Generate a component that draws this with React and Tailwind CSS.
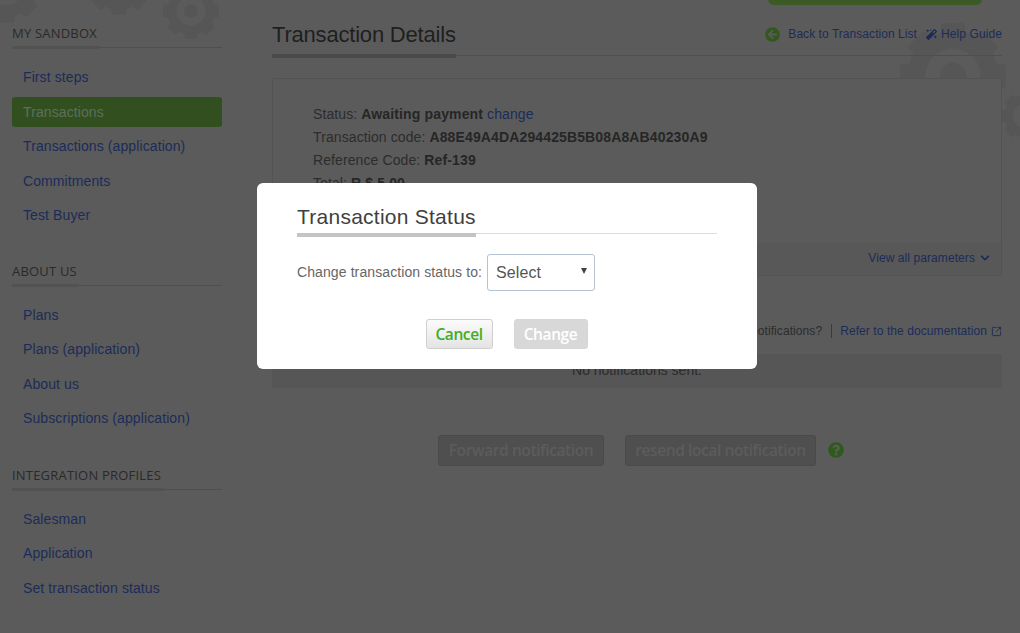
import React from "react";
import { FaArrowCircleLeft, FaMagic, FaChevronDown, FaQuestionCircle } from "react-icons/fa";
import { SquareArrowOutUpRight } from "lucide-react";

const menus = [
  { title: "MY SANDBOX", bar: "w-[87px]", gap: "", items: ["First steps", "Transactions", "Transactions (application)", "Commitments", "Test Buyer"] },
  { title: "ABOUT US", bar: "w-[66px]", gap: "mt-[33.5px]", items: ["Plans", "Plans (application)", "About us", "Subscriptions (application)"] },
  { title: "INTEGRATION PROFILES", bar: "w-[152px]", gap: "mt-[34.5px]", items: ["Salesman", "Application", "Set transaction status"] },
];

const Gear = ({ className }) => {
  const teeth = [0, 45, 90, 135, 180, 225, 270, 315];
  return (
    <svg viewBox="0 0 100 100" className={className} fill="currentColor">
      {teeth.map((a) => (
        <rect key={a} x="39" y="2" width="22" height="22" rx="3" transform={`rotate(${a} 50 50)`} />
      ))}
      <circle cx="50" cy="50" r="33" fill="none" stroke="currentColor" strokeWidth="16" />
      <circle cx="50" cy="50" r="12" />
    </svg>
  );
};

const Sidebar = () => (
  <aside className="w-[210px] ml-3 mr-[50px] shrink-0 pt-[26px] relative">
    {menus.map((m) => (
      <div key={m.title} className={m.gap}>
        <h3 className="text-[13px] leading-[15px] tracking-[0.2px] text-[#2a2a2a] font-['Open_Sans',sans-serif] pb-[6px] border-b border-[#4f4f4f] relative">
          {m.title}
          <span className={`absolute left-0 -bottom-[2px] h-[3px] bg-[#525252] ${m.bar}`}></span>
        </h3>
        <ul className="mt-[14px] flex flex-col gap-[4.5px]">
          {m.items.map((x) => (
            <li
              key={x}
              className={`h-[30px] leading-[30px] pl-[11px] text-[14px] tracking-[0.1px] rounded-[3px] ${
                x === "Transactions" ? "bg-[#32501f] text-[#5e6e5e]" : "text-[#1b2c58]"
              }`}
            >
              {x}
            </li>
          ))}
        </ul>
      </div>
    ))}
  </aside>
);

const Content = () => (
  <main className="w-[730px] relative">
    <div className="absolute -top-[2px] left-[496px] w-[214px] h-[7px] bg-[#3c5a26] rounded-b-[6px]"></div>
    <div className="flex items-start justify-between h-[56px] pt-[21px] border-b border-[#4f4f4f] relative">
      <h1 className="text-[22px] leading-[28px] tracking-[-0.2px] text-[#1f1f1f]">Transaction Details</h1>
      <div className="flex items-center text-[12px] leading-[26px] tracking-[0.05px] text-[#1b2c58]">
        <FaArrowCircleLeft className="text-[#2f5a1c] text-[15px] mr-[8px]" />
        <span>Back to Transaction List</span>
        <FaMagic className="text-[11px] ml-[9px] mr-[4px]" />
        <span className="tracking-[0.1px]">Help Guide</span>
      </div>
      <span className="absolute left-0 -bottom-[3px] h-[4px] w-[184px] bg-[#4a4a4a]"></span>
    </div>

    <section className="mt-[22px] h-[198px] border border-[#535353] bg-[#5b5b5b] flex flex-col relative">
      <div className="flex-1 pl-[40px] pt-[24px] text-[14px] leading-[23px] tracking-[0.1px] text-[#2c2c2c]">
        <p>Status: <b className="font-bold tracking-[0.14px] text-[#262626]">Awaiting payment</b> <span className="text-[#1b2c58]">change</span></p>
        <p>Transaction code: <b className="font-bold tracking-[0.13px] text-[#262626]">A88E49A4DA294425B5B08A8AB40230A9</b></p>
        <p>Reference Code: <b className="font-bold tracking-[0.13px] text-[#262626]">Ref-139</b></p>
        <p>Total: <b className="font-bold tracking-[0.13px] text-[#262626]">R $ 5.00</b></p>
      </div>
      <div className="h-[32px] bg-[#585858] flex items-center justify-end pr-[11px] pb-[2px] text-[12px] tracking-[0.08px] text-[#1b2c58]">
        View all parameters
        <FaChevronDown className="text-[10px] ml-[5px]" />
      </div>
    </section>

    <div className="mt-[45px] flex items-center justify-between h-[20px] text-[12px] tracking-[0.08px]">
      <span className="text-[14px] text-[#2c2c2c]">Notifications</span>
      <div className="flex items-center text-[#2c2c2c]">
        Why notifications?
        <span className="w-px h-[14px] bg-[#3a3a3a] mr-[8px] ml-[9px]"></span>
        <span className="text-[#1b2c58]">Refer to the documentation</span>
        <SquareArrowOutUpRight className="text-[#1b2c58] w-[11px] h-[11px] ml-[4px]" />
      </div>
    </div>

    <div className="mt-[13px] h-[34px] bg-[#565656] text-center text-[14px] leading-[33px] text-[#2c2c2c]">
      No notifications sent.
    </div>

    <div className="mt-[47px] flex items-center pl-[166px]">
      <button className="w-[166px] h-[31px] rounded-[3px] bg-[#4f4f4f] border border-[#4a4a4a] text-[#5c5c5c] text-[15.5px] tracking-[-0.4px] font-semibold font-['Open_Sans',sans-serif]">
        Forward notification
      </button>
      <button className="ml-[21px] w-[191px] h-[31px] rounded-[3px] bg-[#4f4f4f] border border-[#4a4a4a] text-[#5c5c5c] text-[15.5px] tracking-[-0.4px] font-semibold font-['Open_Sans',sans-serif]">
        resend local notification
      </button>
      <FaQuestionCircle className="ml-[12px] text-[#2f5a1c] text-[16px] -mt-[1px]" />
    </div>
  </main>
);

const Modal = () => (
  <div className="absolute left-[257px] top-[183px] w-[500px] h-[186px] bg-white rounded-[6px] px-[40px] pt-[21px]">
    <div className="border-b border-[#dcdcdc] h-[30px] relative">
      <h2 className="text-[21px] leading-[26px] text-[#3f3f3f] tracking-[0.25px]">Transaction Status</h2>
      <span className="absolute left-0 -bottom-[4px] h-[4px] w-[179px] bg-[#c4c4c4]"></span>
    </div>
    <div className="mt-[20px] flex items-center text-[14px] tracking-[0.1px] text-[#666666]">
      <label>Change transaction status to:</label>
      <div className="relative ml-[5px]">
        <select className="appearance-none w-[108px] h-[37px] pl-[8px] rounded-[3px] border border-[#b4c2d2] bg-white text-[16px] text-[#555555]">
          <option>Select</option>
        </select>
        <span className="absolute right-[8px] top-[14px] w-0 h-0 border-x-[3px] border-x-transparent border-t-[6px] border-t-[#444444]"></span>
      </div>
    </div>
    <div className="mt-[28px] flex justify-center gap-[21px] pr-[1px] font-['Open_Sans',sans-serif] font-semibold text-[15.5px] tracking-[-0.4px]">
      <button className="w-[67px] h-[30px] pt-[1px] rounded-[3px] border border-[#cfcfcf] bg-gradient-to-b from-[#fbfbfb] to-[#e4e4e4] text-[#3fae1f]">Cancel</button>
      <button className="w-[74px] h-[30px] pt-[1px] rounded-[3px] border border-[#d6d6d6] bg-[#d8d8d8] text-white">Change</button>
    </div>
  </div>
);

const App = () => (
  <div className="relative h-[633px] w-full overflow-hidden bg-[#5b5b5b] font-['Liberation_Sans',Arial,sans-serif]">
    <Gear className="absolute -left-[32px] -top-[52px] w-[76px] h-[76px] text-[#565656]" />
    <Gear className="absolute left-[80px] -top-[52px] w-[78px] h-[68px] text-[#565656]" />
    <Gear className="absolute left-[162px] -top-[18px] w-[58px] h-[58px] text-[#565656]" />
    <Gear className="absolute left-[898px] top-[21px] w-[110px] h-[110px] text-[#565656]" />
    <Gear className="absolute left-[1000px] top-[90px] w-[52px] h-[52px] text-[#565656]" />
    <div className="relative flex">
      <Sidebar />
      <Content />
    </div>
    <Modal />
  </div>
);

export default App;
